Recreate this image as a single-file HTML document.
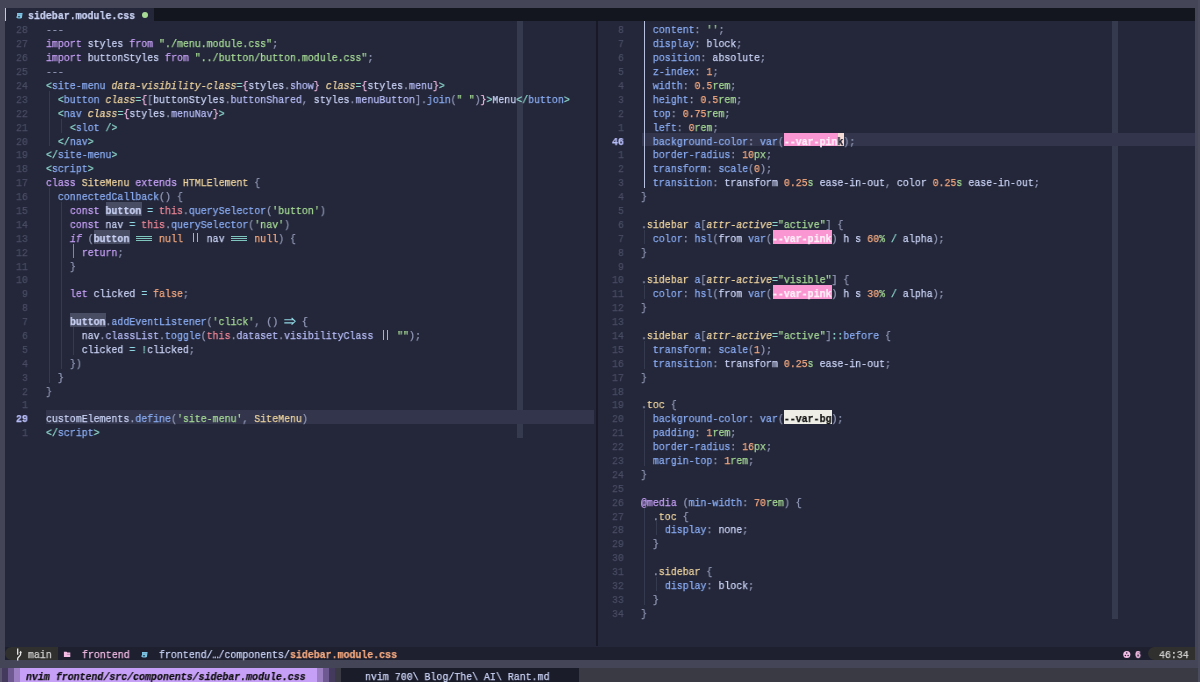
<!DOCTYPE html>
<html><head><meta charset="utf-8"><style>
html,body{margin:0;padding:0;}
body{width:1200px;height:682px;overflow:hidden;position:relative;background:#444657;}
div{position:absolute;}
p{position:absolute;margin:0;white-space:pre;font-family:"Liberation Mono",monospace;font-size:11.3px;line-height:13.89px;padding-top:2.5px;transform:scaleX(0.87773);transform-origin:0 0;will-change:transform;-webkit-text-stroke:0.25px currentColor;}
</style></head><body>
<div style="left:0.00px;top:0.00px;width:1200.00px;height:682.00px;background:#444657;"></div>
<div style="left:4.75px;top:7.56px;width:1190.40px;height:652.83px;background:#24273a;"></div>
<div style="left:4.75px;top:7.56px;width:1190.40px;height:13.59px;background:#14161f;"></div>
<div style="left:4.75px;top:7.56px;width:148.80px;height:13.89px;background:#24273a;"></div>
<div style="left:4.75px;top:646.50px;width:1190.40px;height:13.89px;background:#1e2030;"></div>
<div style="left:516.62px;top:21.45px;width:5.95px;height:416.70px;background:#363a4f;"></div>
<div style="left:46.41px;top:410.37px;width:547.58px;height:13.89px;background:#32354b;"></div>
<div style="left:48.89px;top:90.90px;width:1.00px;height:55.56px;background:#363a4f;"></div>
<div style="left:60.79px;top:118.68px;width:1.00px;height:13.89px;background:#363a4f;"></div>
<div style="left:48.89px;top:188.13px;width:1.00px;height:194.46px;background:#363a4f;"></div>
<div style="left:60.79px;top:202.02px;width:1.00px;height:166.68px;background:#363a4f;"></div>
<div style="left:72.50px;top:243.69px;width:1.40px;height:13.89px;background:#8087a2;"></div>
<div style="left:72.70px;top:327.03px;width:1.00px;height:27.78px;background:#363a4f;"></div>
<p style="left:16.45px;top:21.45px;"><span style="color:#494d64;">28</span></p>
<p style="left:46.21px;top:21.45px;"><span style="color:#939ab7;">---</span></p>
<p style="left:16.45px;top:35.34px;"><span style="color:#494d64;">27</span></p>
<p style="left:46.21px;top:35.34px;"><span style="color:#c6a0f6;">import</span><span style="color:#cad3f5;"> styles </span><span style="color:#c6a0f6;">from</span><span style="color:#cad3f5;"> </span><span style="color:#a6da95;">&quot;./menu.module.css&quot;</span><span style="color:#939ab7;">;</span></p>
<p style="left:16.45px;top:49.23px;"><span style="color:#494d64;">26</span></p>
<p style="left:46.21px;top:49.23px;"><span style="color:#c6a0f6;">import</span><span style="color:#cad3f5;"> buttonStyles </span><span style="color:#c6a0f6;">from</span><span style="color:#cad3f5;"> </span><span style="color:#a6da95;">&quot;../button/button.module.css&quot;</span><span style="color:#939ab7;">;</span></p>
<p style="left:16.45px;top:63.12px;"><span style="color:#494d64;">25</span></p>
<p style="left:46.21px;top:63.12px;"><span style="color:#939ab7;">---</span></p>
<p style="left:16.45px;top:77.01px;"><span style="color:#494d64;">24</span></p>
<p style="left:46.21px;top:77.01px;"><span style="color:#8bd5ca;">&lt;</span><span style="color:#8aadf4;">site-menu</span><span style="color:#cad3f5;"> </span><span style="color:#eed49f;font-style:italic;">data-visibility-class</span><span style="color:#8bd5ca;">=</span><span style="color:#f5bde6;">{</span><span style="color:#cad3f5;">styles</span><span style="color:#939ab7;">.</span><span style="color:#b7bdf8;">show</span><span style="color:#f5bde6;">}</span><span style="color:#cad3f5;"> </span><span style="color:#eed49f;font-style:italic;">class</span><span style="color:#8bd5ca;">=</span><span style="color:#f5bde6;">{</span><span style="color:#cad3f5;">styles</span><span style="color:#939ab7;">.</span><span style="color:#b7bdf8;">menu</span><span style="color:#f5bde6;">}</span><span style="color:#8bd5ca;">&gt;</span></p>
<p style="left:16.45px;top:90.90px;"><span style="color:#494d64;">23</span></p>
<p style="left:46.21px;top:90.90px;"><span style="color:#cad3f5;">  </span><span style="color:#8bd5ca;">&lt;</span><span style="color:#8aadf4;">button</span><span style="color:#cad3f5;"> </span><span style="color:#eed49f;font-style:italic;">class</span><span style="color:#8bd5ca;">=</span><span style="color:#f5bde6;">{</span><span style="color:#939ab7;">[</span><span style="color:#cad3f5;">buttonStyles</span><span style="color:#939ab7;">.</span><span style="color:#b7bdf8;">buttonShared</span><span style="color:#939ab7;">,</span><span style="color:#cad3f5;"> styles</span><span style="color:#939ab7;">.</span><span style="color:#b7bdf8;">menuButton</span><span style="color:#939ab7;">]</span><span style="color:#939ab7;">.</span><span style="color:#8aadf4;">join</span><span style="color:#939ab7;">(</span><span style="color:#a6da95;">&quot; &quot;</span><span style="color:#939ab7;">)</span><span style="color:#f5bde6;">}</span><span style="color:#8bd5ca;">&gt;</span><span style="color:#cad3f5;">Menu</span><span style="color:#8bd5ca;">&lt;/</span><span style="color:#8aadf4;">button</span><span style="color:#8bd5ca;">&gt;</span></p>
<p style="left:16.45px;top:104.79px;"><span style="color:#494d64;">22</span></p>
<p style="left:46.21px;top:104.79px;"><span style="color:#cad3f5;">  </span><span style="color:#8bd5ca;">&lt;</span><span style="color:#8aadf4;">nav</span><span style="color:#cad3f5;"> </span><span style="color:#eed49f;font-style:italic;">class</span><span style="color:#8bd5ca;">=</span><span style="color:#f5bde6;">{</span><span style="color:#cad3f5;">styles</span><span style="color:#939ab7;">.</span><span style="color:#b7bdf8;">menuNav</span><span style="color:#f5bde6;">}</span><span style="color:#8bd5ca;">&gt;</span></p>
<p style="left:16.45px;top:118.68px;"><span style="color:#494d64;">21</span></p>
<p style="left:46.21px;top:118.68px;"><span style="color:#cad3f5;">    </span><span style="color:#8bd5ca;">&lt;</span><span style="color:#8aadf4;">slot</span><span style="color:#cad3f5;"> </span><span style="color:#8bd5ca;">/&gt;</span></p>
<p style="left:16.45px;top:132.57px;"><span style="color:#494d64;">20</span></p>
<p style="left:46.21px;top:132.57px;"><span style="color:#cad3f5;">  </span><span style="color:#8bd5ca;">&lt;/</span><span style="color:#8aadf4;">nav</span><span style="color:#8bd5ca;">&gt;</span></p>
<p style="left:16.45px;top:146.46px;"><span style="color:#494d64;">19</span></p>
<p style="left:46.21px;top:146.46px;"><span style="color:#8bd5ca;">&lt;/</span><span style="color:#8aadf4;">site-menu</span><span style="color:#8bd5ca;">&gt;</span></p>
<p style="left:16.45px;top:160.35px;"><span style="color:#494d64;">18</span></p>
<p style="left:46.21px;top:160.35px;"><span style="color:#8bd5ca;">&lt;</span><span style="color:#8aadf4;">script</span><span style="color:#8bd5ca;">&gt;</span></p>
<p style="left:16.45px;top:174.24px;"><span style="color:#494d64;">17</span></p>
<p style="left:46.21px;top:174.24px;"><span style="color:#c6a0f6;">class</span><span style="color:#cad3f5;"> </span><span style="color:#eed49f;">SiteMenu</span><span style="color:#cad3f5;"> </span><span style="color:#c6a0f6;">extends</span><span style="color:#cad3f5;"> </span><span style="color:#eed49f;">HTMLElement</span><span style="color:#cad3f5;"> </span><span style="color:#939ab7;">{</span></p>
<p style="left:16.45px;top:188.13px;"><span style="color:#494d64;">16</span></p>
<p style="left:46.21px;top:188.13px;"><span style="color:#cad3f5;">  </span><span style="color:#8aadf4;">connectedCallback</span><span style="color:#939ab7;">()</span><span style="color:#cad3f5;"> </span><span style="color:#939ab7;">{</span></p>
<p style="left:16.45px;top:202.02px;"><span style="color:#494d64;">15</span></p>
<div style="left:105.93px;top:202.02px;width:35.71px;height:13.89px;background:#494d64"></div>
<p style="left:46.21px;top:202.02px;"><span style="color:#cad3f5;">    </span><span style="color:#c6a0f6;">const</span><span style="color:#cad3f5;"> </span><span style="color:#cad3f5;font-weight:bold;">button</span><span style="color:#cad3f5;"> </span><span style="color:#91d7e3;">=</span><span style="color:#cad3f5;"> </span><span style="color:#ed8796;">this</span><span style="color:#939ab7;">.</span><span style="color:#8aadf4;">querySelector</span><span style="color:#939ab7;">(</span><span style="color:#a6da95;">&#x27;button&#x27;</span><span style="color:#939ab7;">)</span></p>
<p style="left:16.45px;top:215.91px;"><span style="color:#494d64;">14</span></p>
<p style="left:46.21px;top:215.91px;"><span style="color:#cad3f5;">    </span><span style="color:#c6a0f6;">const</span><span style="color:#cad3f5;"> nav </span><span style="color:#91d7e3;">=</span><span style="color:#cad3f5;"> </span><span style="color:#ed8796;">this</span><span style="color:#939ab7;">.</span><span style="color:#8aadf4;">querySelector</span><span style="color:#939ab7;">(</span><span style="color:#a6da95;">&#x27;nav&#x27;</span><span style="color:#939ab7;">)</span></p>
<p style="left:16.45px;top:229.80px;"><span style="color:#494d64;">13</span></p>
<div style="left:94.03px;top:229.80px;width:35.71px;height:13.89px;background:#494d64"></div>
<div style="left:135.79px;top:236.10px;width:16.26px;height:1.05px;background:#80c6bf"></div>
<div style="left:135.79px;top:237.95px;width:16.26px;height:1.05px;background:#80c6bf"></div>
<div style="left:135.79px;top:239.80px;width:16.26px;height:1.05px;background:#80c6bf"></div>
<div style="left:192.66px;top:233.10px;width:1.25px;height:9.3px;background:#80c6bf"></div>
<div style="left:196.66px;top:233.10px;width:1.25px;height:9.3px;background:#80c6bf"></div>
<div style="left:231.03px;top:236.10px;width:16.26px;height:1.05px;background:#80c6bf"></div>
<div style="left:231.03px;top:237.95px;width:16.26px;height:1.05px;background:#80c6bf"></div>
<div style="left:231.03px;top:239.80px;width:16.26px;height:1.05px;background:#80c6bf"></div>
<p style="left:46.21px;top:229.80px;"><span style="color:#cad3f5;">    </span><span style="color:#c6a0f6;font-style:italic;">if</span><span style="color:#cad3f5;"> </span><span style="color:#939ab7;">(</span><span style="color:#cad3f5;font-weight:bold;">button</span><span style="color:#cad3f5;"> </span>   <span style="color:#cad3f5;"> </span><span style="color:#f5a97f;">null</span><span style="color:#cad3f5;"> </span>  <span style="color:#cad3f5;"> nav </span>   <span style="color:#cad3f5;"> </span><span style="color:#f5a97f;">null</span><span style="color:#939ab7;">)</span><span style="color:#cad3f5;"> </span><span style="color:#939ab7;">{</span></p>
<p style="left:16.45px;top:243.69px;"><span style="color:#494d64;">12</span></p>
<p style="left:46.21px;top:243.69px;"><span style="color:#cad3f5;">      </span><span style="color:#c6a0f6;">return</span><span style="color:#939ab7;">;</span></p>
<p style="left:16.45px;top:257.58px;"><span style="color:#494d64;">11</span></p>
<p style="left:46.21px;top:257.58px;"><span style="color:#cad3f5;">    </span><span style="color:#939ab7;">}</span></p>
<p style="left:16.45px;top:271.47px;"><span style="color:#494d64;">10</span></p>
<p style="left:22.41px;top:285.36px;"><span style="color:#494d64;">9</span></p>
<p style="left:46.21px;top:285.36px;"><span style="color:#cad3f5;">    </span><span style="color:#c6a0f6;">let</span><span style="color:#cad3f5;"> clicked </span><span style="color:#91d7e3;">=</span><span style="color:#cad3f5;"> </span><span style="color:#f5a97f;">false</span><span style="color:#939ab7;">;</span></p>
<p style="left:22.41px;top:299.25px;"><span style="color:#494d64;">8</span></p>
<p style="left:22.41px;top:313.14px;"><span style="color:#494d64;">7</span></p>
<div style="left:70.22px;top:313.14px;width:35.71px;height:13.89px;background:#494d64"></div>
<svg style="position:absolute;left:284.49px;top:313.14px" width="13" height="14" viewBox="0 0 13 14"><path d="M0.3,6.7 H9.6 M0.3,9.9 H9.6 M7.6,4.9 L11.1,8.3 L7.6,11.7" stroke="#91d7e3" stroke-width="1.15" fill="none"/></svg>
<p style="left:46.21px;top:313.14px;"><span style="color:#cad3f5;">    </span><span style="color:#cad3f5;font-weight:bold;">button</span><span style="color:#939ab7;">.</span><span style="color:#8aadf4;">addEventListener</span><span style="color:#939ab7;">(</span><span style="color:#a6da95;">&#x27;click&#x27;</span><span style="color:#939ab7;">,</span><span style="color:#cad3f5;"> </span><span style="color:#939ab7;">()</span><span style="color:#cad3f5;"> </span>  <span style="color:#cad3f5;"> </span><span style="color:#939ab7;">{</span></p>
<p style="left:22.41px;top:327.03px;"><span style="color:#494d64;">6</span></p>
<div style="left:383.13px;top:330.33px;width:1.25px;height:9.3px;background:#80c6bf"></div>
<div style="left:387.13px;top:330.33px;width:1.25px;height:9.3px;background:#80c6bf"></div>
<p style="left:46.21px;top:327.03px;"><span style="color:#cad3f5;">      nav</span><span style="color:#939ab7;">.</span><span style="color:#b7bdf8;">classList</span><span style="color:#939ab7;">.</span><span style="color:#8aadf4;">toggle</span><span style="color:#939ab7;">(</span><span style="color:#ed8796;">this</span><span style="color:#939ab7;">.</span><span style="color:#b7bdf8;">dataset</span><span style="color:#939ab7;">.</span><span style="color:#b7bdf8;">visibilityClass</span><span style="color:#cad3f5;"> </span>  <span style="color:#cad3f5;"> </span><span style="color:#a6da95;">&quot;&quot;</span><span style="color:#939ab7;">);</span></p>
<p style="left:22.41px;top:340.92px;"><span style="color:#494d64;">5</span></p>
<p style="left:46.21px;top:340.92px;"><span style="color:#cad3f5;">      clicked </span><span style="color:#91d7e3;">=</span><span style="color:#cad3f5;"> </span><span style="color:#8bd5ca;">!</span><span style="color:#cad3f5;">clicked</span><span style="color:#939ab7;">;</span></p>
<p style="left:22.41px;top:354.81px;"><span style="color:#494d64;">4</span></p>
<p style="left:46.21px;top:354.81px;"><span style="color:#cad3f5;">    </span><span style="color:#939ab7;">})</span></p>
<p style="left:22.41px;top:368.70px;"><span style="color:#494d64;">3</span></p>
<p style="left:46.21px;top:368.70px;"><span style="color:#cad3f5;">  </span><span style="color:#939ab7;">}</span></p>
<p style="left:22.41px;top:382.59px;"><span style="color:#494d64;">2</span></p>
<p style="left:46.21px;top:382.59px;"><span style="color:#939ab7;">}</span></p>
<p style="left:22.41px;top:396.48px;"><span style="color:#494d64;">1</span></p>
<p style="left:16.45px;top:410.37px;"><span style="color:#b7bdf8;font-weight:bold;">29</span></p>
<p style="left:46.21px;top:410.37px;"><span style="color:#cad3f5;">customElements</span><span style="color:#939ab7;">.</span><span style="color:#8aadf4;">define</span><span style="color:#939ab7;">(</span><span style="color:#a6da95;">&#x27;site-menu&#x27;</span><span style="color:#939ab7;">,</span><span style="color:#cad3f5;"> </span><span style="color:#eed49f;">SiteMenu</span><span style="color:#939ab7;">)</span></p>
<p style="left:22.41px;top:424.26px;"><span style="color:#494d64;">1</span></p>
<p style="left:46.21px;top:424.26px;"><span style="color:#8bd5ca;">&lt;/</span><span style="color:#8aadf4;">script</span><span style="color:#8bd5ca;">&gt;</span></p>
<div style="left:1111.82px;top:21.45px;width:5.95px;height:597.27px;background:#363a4f;"></div>
<div style="left:641.61px;top:132.57px;width:553.54px;height:13.89px;background:#32354b;"></div>
<div style="left:643.89px;top:21.45px;width:1.40px;height:166.68px;background:#b8c0e0;"></div>
<div style="left:644.09px;top:229.80px;width:1.00px;height:13.89px;background:#363a4f;"></div>
<div style="left:644.09px;top:285.36px;width:1.00px;height:13.89px;background:#363a4f;"></div>
<div style="left:644.09px;top:340.92px;width:1.00px;height:27.78px;background:#363a4f;"></div>
<div style="left:644.09px;top:410.37px;width:1.00px;height:55.56px;background:#363a4f;"></div>
<div style="left:644.09px;top:507.60px;width:1.00px;height:97.23px;background:#363a4f;"></div>
<div style="left:655.99px;top:521.49px;width:1.00px;height:13.89px;background:#363a4f;"></div>
<div style="left:655.99px;top:577.05px;width:1.00px;height:13.89px;background:#363a4f;"></div>
<p style="left:617.61px;top:21.45px;"><span style="color:#494d64;">8</span></p>
<p style="left:641.41px;top:21.45px;"><span style="color:#cad3f5;">  </span><span style="color:#8aadf4;">content</span><span style="color:#939ab7;">:</span><span style="color:#cad3f5;"> </span><span style="color:#a6da95;">&#x27;&#x27;</span><span style="color:#939ab7;">;</span></p>
<p style="left:617.61px;top:35.34px;"><span style="color:#494d64;">7</span></p>
<p style="left:641.41px;top:35.34px;"><span style="color:#cad3f5;">  </span><span style="color:#8aadf4;">display</span><span style="color:#939ab7;">:</span><span style="color:#cad3f5;"> block</span><span style="color:#939ab7;">;</span></p>
<p style="left:617.61px;top:49.23px;"><span style="color:#494d64;">6</span></p>
<p style="left:641.41px;top:49.23px;"><span style="color:#cad3f5;">  </span><span style="color:#8aadf4;">position</span><span style="color:#939ab7;">:</span><span style="color:#cad3f5;"> absolute</span><span style="color:#939ab7;">;</span></p>
<p style="left:617.61px;top:63.12px;"><span style="color:#494d64;">5</span></p>
<p style="left:641.41px;top:63.12px;"><span style="color:#cad3f5;">  </span><span style="color:#8aadf4;">z-index</span><span style="color:#939ab7;">:</span><span style="color:#cad3f5;"> </span><span style="color:#f5a97f;">1</span><span style="color:#939ab7;">;</span></p>
<p style="left:617.61px;top:77.01px;"><span style="color:#494d64;">4</span></p>
<p style="left:641.41px;top:77.01px;"><span style="color:#cad3f5;">  </span><span style="color:#8aadf4;">width</span><span style="color:#939ab7;">:</span><span style="color:#cad3f5;"> </span><span style="color:#f5a97f;">0.5</span><span style="color:#a6da95;">rem</span><span style="color:#939ab7;">;</span></p>
<p style="left:617.61px;top:90.90px;"><span style="color:#494d64;">3</span></p>
<p style="left:641.41px;top:90.90px;"><span style="color:#cad3f5;">  </span><span style="color:#8aadf4;">height</span><span style="color:#939ab7;">:</span><span style="color:#cad3f5;"> </span><span style="color:#f5a97f;">0.5</span><span style="color:#a6da95;">rem</span><span style="color:#939ab7;">;</span></p>
<p style="left:617.61px;top:104.79px;"><span style="color:#494d64;">2</span></p>
<p style="left:641.41px;top:104.79px;"><span style="color:#cad3f5;">  </span><span style="color:#8aadf4;">top</span><span style="color:#939ab7;">:</span><span style="color:#cad3f5;"> </span><span style="color:#f5a97f;">0.75</span><span style="color:#a6da95;">rem</span><span style="color:#939ab7;">;</span></p>
<p style="left:617.61px;top:118.68px;"><span style="color:#494d64;">1</span></p>
<p style="left:641.41px;top:118.68px;"><span style="color:#cad3f5;">  </span><span style="color:#8aadf4;">left</span><span style="color:#939ab7;">:</span><span style="color:#cad3f5;"> </span><span style="color:#f5a97f;">0</span><span style="color:#a6da95;">rem</span><span style="color:#939ab7;">;</span></p>
<p style="left:611.65px;top:132.57px;"><span style="color:#b7bdf8;font-weight:bold;">46</span></p>
<div style="left:784.46px;top:132.57px;width:53.57px;height:13.89px;background:#fa96d1"></div>
<div style="left:838.03px;top:132.57px;width:5.95px;height:13.89px;background:#f4dbd6"></div>
<p style="left:641.41px;top:132.57px;"><span style="color:#cad3f5;">  </span><span style="color:#8aadf4;">background-color</span><span style="color:#939ab7;">:</span><span style="color:#cad3f5;"> </span><span style="color:#8aadf4;">var</span><span style="color:#939ab7;">(</span><span style="color:#fff0f8;font-weight:bold;">--var-pin</span><span style="color:#24273a;font-weight:bold;">k</span><span style="color:#939ab7;">)</span><span style="color:#939ab7;">;</span></p>
<p style="left:617.61px;top:146.46px;"><span style="color:#494d64;">1</span></p>
<p style="left:641.41px;top:146.46px;"><span style="color:#cad3f5;">  </span><span style="color:#8aadf4;">border-radius</span><span style="color:#939ab7;">:</span><span style="color:#cad3f5;"> </span><span style="color:#f5a97f;">10</span><span style="color:#a6da95;">px</span><span style="color:#939ab7;">;</span></p>
<p style="left:617.61px;top:160.35px;"><span style="color:#494d64;">2</span></p>
<p style="left:641.41px;top:160.35px;"><span style="color:#cad3f5;">  </span><span style="color:#8aadf4;">transform</span><span style="color:#939ab7;">:</span><span style="color:#cad3f5;"> </span><span style="color:#8aadf4;">scale</span><span style="color:#939ab7;">(</span><span style="color:#f5a97f;">0</span><span style="color:#939ab7;">)</span><span style="color:#939ab7;">;</span></p>
<p style="left:617.61px;top:174.24px;"><span style="color:#494d64;">3</span></p>
<p style="left:641.41px;top:174.24px;"><span style="color:#cad3f5;">  </span><span style="color:#8aadf4;">transition</span><span style="color:#939ab7;">:</span><span style="color:#cad3f5;"> transform </span><span style="color:#f5a97f;">0.25</span><span style="color:#a6da95;">s</span><span style="color:#cad3f5;"> ease-in-out</span><span style="color:#939ab7;">,</span><span style="color:#cad3f5;"> color </span><span style="color:#f5a97f;">0.25</span><span style="color:#a6da95;">s</span><span style="color:#cad3f5;"> ease-in-out</span><span style="color:#939ab7;">;</span></p>
<p style="left:617.61px;top:188.13px;"><span style="color:#494d64;">4</span></p>
<p style="left:641.41px;top:188.13px;"><span style="color:#939ab7;">}</span></p>
<p style="left:617.61px;top:202.02px;"><span style="color:#494d64;">5</span></p>
<p style="left:617.61px;top:215.91px;"><span style="color:#494d64;">6</span></p>
<p style="left:641.41px;top:215.91px;"><span style="color:#939ab7;">.</span><span style="color:#eed49f;">sidebar</span><span style="color:#cad3f5;"> </span><span style="color:#8aadf4;">a</span><span style="color:#939ab7;">[</span><span style="color:#eed49f;font-style:italic;">attr-active</span><span style="color:#8bd5ca;">=</span><span style="color:#a6da95;">&quot;active&quot;</span><span style="color:#939ab7;">]</span><span style="color:#cad3f5;"> </span><span style="color:#939ab7;">{</span></p>
<p style="left:617.61px;top:229.80px;"><span style="color:#494d64;">7</span></p>
<div style="left:772.56px;top:229.80px;width:59.52px;height:13.89px;background:#fa96d1"></div>
<p style="left:641.41px;top:229.80px;"><span style="color:#cad3f5;">  </span><span style="color:#8aadf4;">color</span><span style="color:#939ab7;">:</span><span style="color:#cad3f5;"> </span><span style="color:#8aadf4;">hsl</span><span style="color:#939ab7;">(</span><span style="color:#cad3f5;">from</span><span style="color:#cad3f5;"> </span><span style="color:#8aadf4;">var</span><span style="color:#939ab7;">(</span><span style="color:#fff0f8;font-weight:bold;">--var-pink</span><span style="color:#939ab7;">)</span><span style="color:#cad3f5;"> h s </span><span style="color:#f5a97f;">60</span><span style="color:#a6da95;">%</span><span style="color:#cad3f5;"> </span><span style="color:#8bd5ca;">/</span><span style="color:#cad3f5;"> alpha</span><span style="color:#939ab7;">);</span></p>
<p style="left:617.61px;top:243.69px;"><span style="color:#494d64;">8</span></p>
<p style="left:641.41px;top:243.69px;"><span style="color:#939ab7;">}</span></p>
<p style="left:617.61px;top:257.58px;"><span style="color:#494d64;">9</span></p>
<p style="left:611.65px;top:271.47px;"><span style="color:#494d64;">10</span></p>
<p style="left:641.41px;top:271.47px;"><span style="color:#939ab7;">.</span><span style="color:#eed49f;">sidebar</span><span style="color:#cad3f5;"> </span><span style="color:#8aadf4;">a</span><span style="color:#939ab7;">[</span><span style="color:#eed49f;font-style:italic;">attr-active</span><span style="color:#8bd5ca;">=</span><span style="color:#a6da95;">&quot;visible&quot;</span><span style="color:#939ab7;">]</span><span style="color:#cad3f5;"> </span><span style="color:#939ab7;">{</span></p>
<p style="left:611.65px;top:285.36px;"><span style="color:#494d64;">11</span></p>
<div style="left:772.56px;top:285.36px;width:59.52px;height:13.89px;background:#fa96d1"></div>
<p style="left:641.41px;top:285.36px;"><span style="color:#cad3f5;">  </span><span style="color:#8aadf4;">color</span><span style="color:#939ab7;">:</span><span style="color:#cad3f5;"> </span><span style="color:#8aadf4;">hsl</span><span style="color:#939ab7;">(</span><span style="color:#cad3f5;">from</span><span style="color:#cad3f5;"> </span><span style="color:#8aadf4;">var</span><span style="color:#939ab7;">(</span><span style="color:#fff0f8;font-weight:bold;">--var-pink</span><span style="color:#939ab7;">)</span><span style="color:#cad3f5;"> h s </span><span style="color:#f5a97f;">30</span><span style="color:#a6da95;">%</span><span style="color:#cad3f5;"> </span><span style="color:#8bd5ca;">/</span><span style="color:#cad3f5;"> alpha</span><span style="color:#939ab7;">);</span></p>
<p style="left:611.65px;top:299.25px;"><span style="color:#494d64;">12</span></p>
<p style="left:641.41px;top:299.25px;"><span style="color:#939ab7;">}</span></p>
<p style="left:611.65px;top:313.14px;"><span style="color:#494d64;">13</span></p>
<p style="left:611.65px;top:327.03px;"><span style="color:#494d64;">14</span></p>
<p style="left:641.41px;top:327.03px;"><span style="color:#939ab7;">.</span><span style="color:#eed49f;">sidebar</span><span style="color:#cad3f5;"> </span><span style="color:#8aadf4;">a</span><span style="color:#939ab7;">[</span><span style="color:#eed49f;font-style:italic;">attr-active</span><span style="color:#8bd5ca;">=</span><span style="color:#a6da95;">&quot;active&quot;</span><span style="color:#939ab7;">]</span><span style="color:#8bd5ca;">::</span><span style="color:#8aadf4;">before</span><span style="color:#cad3f5;"> </span><span style="color:#939ab7;">{</span></p>
<p style="left:611.65px;top:340.92px;"><span style="color:#494d64;">15</span></p>
<p style="left:641.41px;top:340.92px;"><span style="color:#cad3f5;">  </span><span style="color:#8aadf4;">transform</span><span style="color:#939ab7;">:</span><span style="color:#cad3f5;"> </span><span style="color:#8aadf4;">scale</span><span style="color:#939ab7;">(</span><span style="color:#f5a97f;">1</span><span style="color:#939ab7;">)</span><span style="color:#939ab7;">;</span></p>
<p style="left:611.65px;top:354.81px;"><span style="color:#494d64;">16</span></p>
<p style="left:641.41px;top:354.81px;"><span style="color:#cad3f5;">  </span><span style="color:#8aadf4;">transition</span><span style="color:#939ab7;">:</span><span style="color:#cad3f5;"> transform </span><span style="color:#f5a97f;">0.25</span><span style="color:#a6da95;">s</span><span style="color:#cad3f5;"> ease-in-out</span><span style="color:#939ab7;">;</span></p>
<p style="left:611.65px;top:368.70px;"><span style="color:#494d64;">17</span></p>
<p style="left:641.41px;top:368.70px;"><span style="color:#939ab7;">}</span></p>
<p style="left:611.65px;top:382.59px;"><span style="color:#494d64;">18</span></p>
<p style="left:611.65px;top:396.48px;"><span style="color:#494d64;">19</span></p>
<p style="left:641.41px;top:396.48px;"><span style="color:#939ab7;">.</span><span style="color:#eed49f;">toc</span><span style="color:#cad3f5;"> </span><span style="color:#939ab7;">{</span></p>
<p style="left:611.65px;top:410.37px;"><span style="color:#494d64;">20</span></p>
<div style="left:784.46px;top:410.37px;width:47.62px;height:13.89px;background:#eeeee6"></div>
<p style="left:641.41px;top:410.37px;"><span style="color:#cad3f5;">  </span><span style="color:#8aadf4;">background-color</span><span style="color:#939ab7;">:</span><span style="color:#cad3f5;"> </span><span style="color:#8aadf4;">var</span><span style="color:#939ab7;">(</span><span style="color:#111111;font-weight:bold;">--var-bg</span><span style="color:#939ab7;">)</span><span style="color:#939ab7;">;</span></p>
<p style="left:611.65px;top:424.26px;"><span style="color:#494d64;">21</span></p>
<p style="left:641.41px;top:424.26px;"><span style="color:#cad3f5;">  </span><span style="color:#8aadf4;">padding</span><span style="color:#939ab7;">:</span><span style="color:#cad3f5;"> </span><span style="color:#f5a97f;">1</span><span style="color:#a6da95;">rem</span><span style="color:#939ab7;">;</span></p>
<p style="left:611.65px;top:438.15px;"><span style="color:#494d64;">22</span></p>
<p style="left:641.41px;top:438.15px;"><span style="color:#cad3f5;">  </span><span style="color:#8aadf4;">border-radius</span><span style="color:#939ab7;">:</span><span style="color:#cad3f5;"> </span><span style="color:#f5a97f;">16</span><span style="color:#a6da95;">px</span><span style="color:#939ab7;">;</span></p>
<p style="left:611.65px;top:452.04px;"><span style="color:#494d64;">23</span></p>
<p style="left:641.41px;top:452.04px;"><span style="color:#cad3f5;">  </span><span style="color:#8aadf4;">margin-top</span><span style="color:#939ab7;">:</span><span style="color:#cad3f5;"> </span><span style="color:#f5a97f;">1</span><span style="color:#a6da95;">rem</span><span style="color:#939ab7;">;</span></p>
<p style="left:611.65px;top:465.93px;"><span style="color:#494d64;">24</span></p>
<p style="left:641.41px;top:465.93px;"><span style="color:#939ab7;">}</span></p>
<p style="left:611.65px;top:479.82px;"><span style="color:#494d64;">25</span></p>
<p style="left:611.65px;top:493.71px;"><span style="color:#494d64;">26</span></p>
<p style="left:641.41px;top:493.71px;"><span style="color:#c6a0f6;">@media</span><span style="color:#cad3f5;"> </span><span style="color:#939ab7;">(</span><span style="color:#8aadf4;">min-width</span><span style="color:#939ab7;">:</span><span style="color:#cad3f5;"> </span><span style="color:#f5a97f;">70</span><span style="color:#a6da95;">rem</span><span style="color:#939ab7;">)</span><span style="color:#cad3f5;"> </span><span style="color:#939ab7;">{</span></p>
<p style="left:611.65px;top:507.60px;"><span style="color:#494d64;">27</span></p>
<p style="left:641.41px;top:507.60px;"><span style="color:#cad3f5;">  </span><span style="color:#939ab7;">.</span><span style="color:#eed49f;">toc</span><span style="color:#cad3f5;"> </span><span style="color:#939ab7;">{</span></p>
<p style="left:611.65px;top:521.49px;"><span style="color:#494d64;">28</span></p>
<p style="left:641.41px;top:521.49px;"><span style="color:#cad3f5;">    </span><span style="color:#8aadf4;">display</span><span style="color:#939ab7;">:</span><span style="color:#cad3f5;"> none</span><span style="color:#939ab7;">;</span></p>
<p style="left:611.65px;top:535.38px;"><span style="color:#494d64;">29</span></p>
<p style="left:641.41px;top:535.38px;"><span style="color:#cad3f5;">  </span><span style="color:#939ab7;">}</span></p>
<p style="left:611.65px;top:549.27px;"><span style="color:#494d64;">30</span></p>
<p style="left:611.65px;top:563.16px;"><span style="color:#494d64;">31</span></p>
<p style="left:641.41px;top:563.16px;"><span style="color:#cad3f5;">  </span><span style="color:#939ab7;">.</span><span style="color:#eed49f;">sidebar</span><span style="color:#cad3f5;"> </span><span style="color:#939ab7;">{</span></p>
<p style="left:611.65px;top:577.05px;"><span style="color:#494d64;">32</span></p>
<p style="left:641.41px;top:577.05px;"><span style="color:#cad3f5;">    </span><span style="color:#8aadf4;">display</span><span style="color:#939ab7;">:</span><span style="color:#cad3f5;"> block</span><span style="color:#939ab7;">;</span></p>
<p style="left:611.65px;top:590.94px;"><span style="color:#494d64;">33</span></p>
<p style="left:641.41px;top:590.94px;"><span style="color:#cad3f5;">  </span><span style="color:#939ab7;">}</span></p>
<p style="left:611.65px;top:604.83px;"><span style="color:#494d64;">34</span></p>
<p style="left:641.41px;top:604.83px;"><span style="color:#939ab7;">}</span></p>
<div style="left:595.97px;top:21.45px;width:1.60px;height:625.05px;background:#181926;"></div>
<div style="left:4.50px;top:7.76px;width:1.60px;height:13.49px;background:#c0c6f6;"></div>
<svg style="position:absolute;left:15.40px;top:11.90px" width="10" height="9" viewBox="-2 -1 10 9"><path d="M0,0 H5.6 L4.9,4.9 Q3.2,5.7 1.6,5.6 Q0,5.3 -0.7,4.4 L-0.5,3.5 L0,3.3 Z" fill="#7dc4e4"/><rect x="0.5" y="1.1" width="4.4" height="0.45" fill="#1e2030" opacity="0.25"/><ellipse cx="2.0" cy="3.7" rx="1.2" ry="0.55" fill="#10111a"/></svg>
<p style="left:28.36px;top:6.96px;"><span style="color:#cad3f5;font-weight:bold;">sidebar.module.css</span></p>
<div style="left:141.8px;top:11.7px;width:5.9px;height:5.9px;border-radius:50%;background:#a6da95"></div>
<div style="left:4.75px;top:646.50px;width:53.57px;height:13.89px;background:#30302e;border-radius:7px 0 0 7px"></div>
<p style="left:28.36px;top:645.90px;"><span style="color:#d0d0d0;">main</span></p>
<svg style="position:absolute;left:14px;top:646px" width="10" height="16" viewBox="14 646 10 16"><path d="M17.7,648.5 V654.8 M17.7,660.5 V658.6 C17.7,656.6 20.6,656.2 20.6,654.2 V651.8" stroke="#e6e6e6" stroke-width="1.3" fill="none"/><path d="M19.2,652.8 L20.6,650.8 L22.0,652.8 Z" fill="#e6e6e6"/></svg>
<svg style="position:absolute;left:63px;top:650px" width="9" height="9" viewBox="63 650 9 9"><path d="M63.9,651.7 H66.6 L67.3,652.4 H70.3 V656.9 H63.9 Z" fill="#f5bde6"/><rect x="66.8" y="653.9" width="3.5" height="0.6" fill="#1e2030" opacity="0.5"/></svg>
<p style="left:81.93px;top:645.90px;"><span style="color:#f5bde6;">frontend</span></p>
<svg style="position:absolute;left:140.30px;top:650.90px" width="10" height="9" viewBox="-2 -1 10 9"><path d="M0,0 H5.6 L4.9,4.9 Q3.2,5.7 1.6,5.6 Q0,5.3 -0.7,4.4 L-0.5,3.5 L0,3.3 Z" fill="#7dc4e4"/><rect x="0.5" y="1.1" width="4.4" height="0.45" fill="#1e2030" opacity="0.25"/><ellipse cx="2.0" cy="3.7" rx="1.2" ry="0.55" fill="#10111a"/></svg>
<p style="left:159.30px;top:645.90px;"><span style="color:#cad3f5;">frontend/…/components/</span><span style="color:#f5a97f;font-weight:bold;">sidebar.module.css</span></p>
<svg style="position:absolute;left:1122px;top:650px" width="10" height="10" viewBox="1122 650 10 10"><circle cx="1126.8" cy="654.45" r="3.55" fill="#f5bde6"/><circle cx="1126.7" cy="653.0" r="0.8" fill="#1e2030"/><circle cx="1125.4" cy="655.5" r="0.8" fill="#1e2030"/><circle cx="1128.1" cy="655.5" r="0.8" fill="#1e2030"/></svg>
<p style="left:1135.43px;top:645.90px;"><span style="color:#f5bde6;font-weight:bold;">6</span></p>
<div style="left:1147.53px;top:646.50px;width:47.62px;height:13.89px;background:#30302e;border-radius:7px 0 0 7px"></div>
<p style="left:1159.24px;top:645.90px;"><span style="color:#d0d0d0;">46:34</span></p>
<div style="left:0.00px;top:668.00px;width:1200.00px;height:14.00px;background:#3a3a44;"></div>
<div style="left:0.00px;top:668.00px;width:2.00px;height:14.00px;background:#5a5670;"></div>
<div style="left:2.00px;top:668.00px;width:5.95px;height:14.00px;background:#433a5e;"></div>
<div style="left:7.95px;top:668.00px;width:5.95px;height:14.00px;background:#6e5a90;"></div>
<div style="left:13.90px;top:668.00px;width:5.95px;height:14.00px;background:#9b7fc2;"></div>
<div style="left:19.86px;top:668.00px;width:297.60px;height:14.00px;background:#c6a0f6;"></div>
<div style="left:317.46px;top:668.00px;width:5.95px;height:14.00px;background:#9b7fc2;"></div>
<div style="left:323.41px;top:668.00px;width:5.95px;height:14.00px;background:#6e5a90;"></div>
<div style="left:329.36px;top:668.00px;width:5.95px;height:14.00px;background:#433a5e;"></div>
<div style="left:341.26px;top:668.00px;width:238.08px;height:14.00px;background:#1b1c2a;"></div>
<div style="left:1198.40px;top:0.00px;width:1.60px;height:682.00px;background:#4a4b5c;"></div>
<p style="left:25.61px;top:668.00px;"><span style="color:#111111;font-style:italic;font-weight:bold;">nvim frontend/src/components/sidebar.module.css</span></p>
<p style="left:364.87px;top:668.00px;"><span style="color:#cad3f5;">nvim 700\ Blog/The\ AI\ Rant.md</span></p>
</body></html>
